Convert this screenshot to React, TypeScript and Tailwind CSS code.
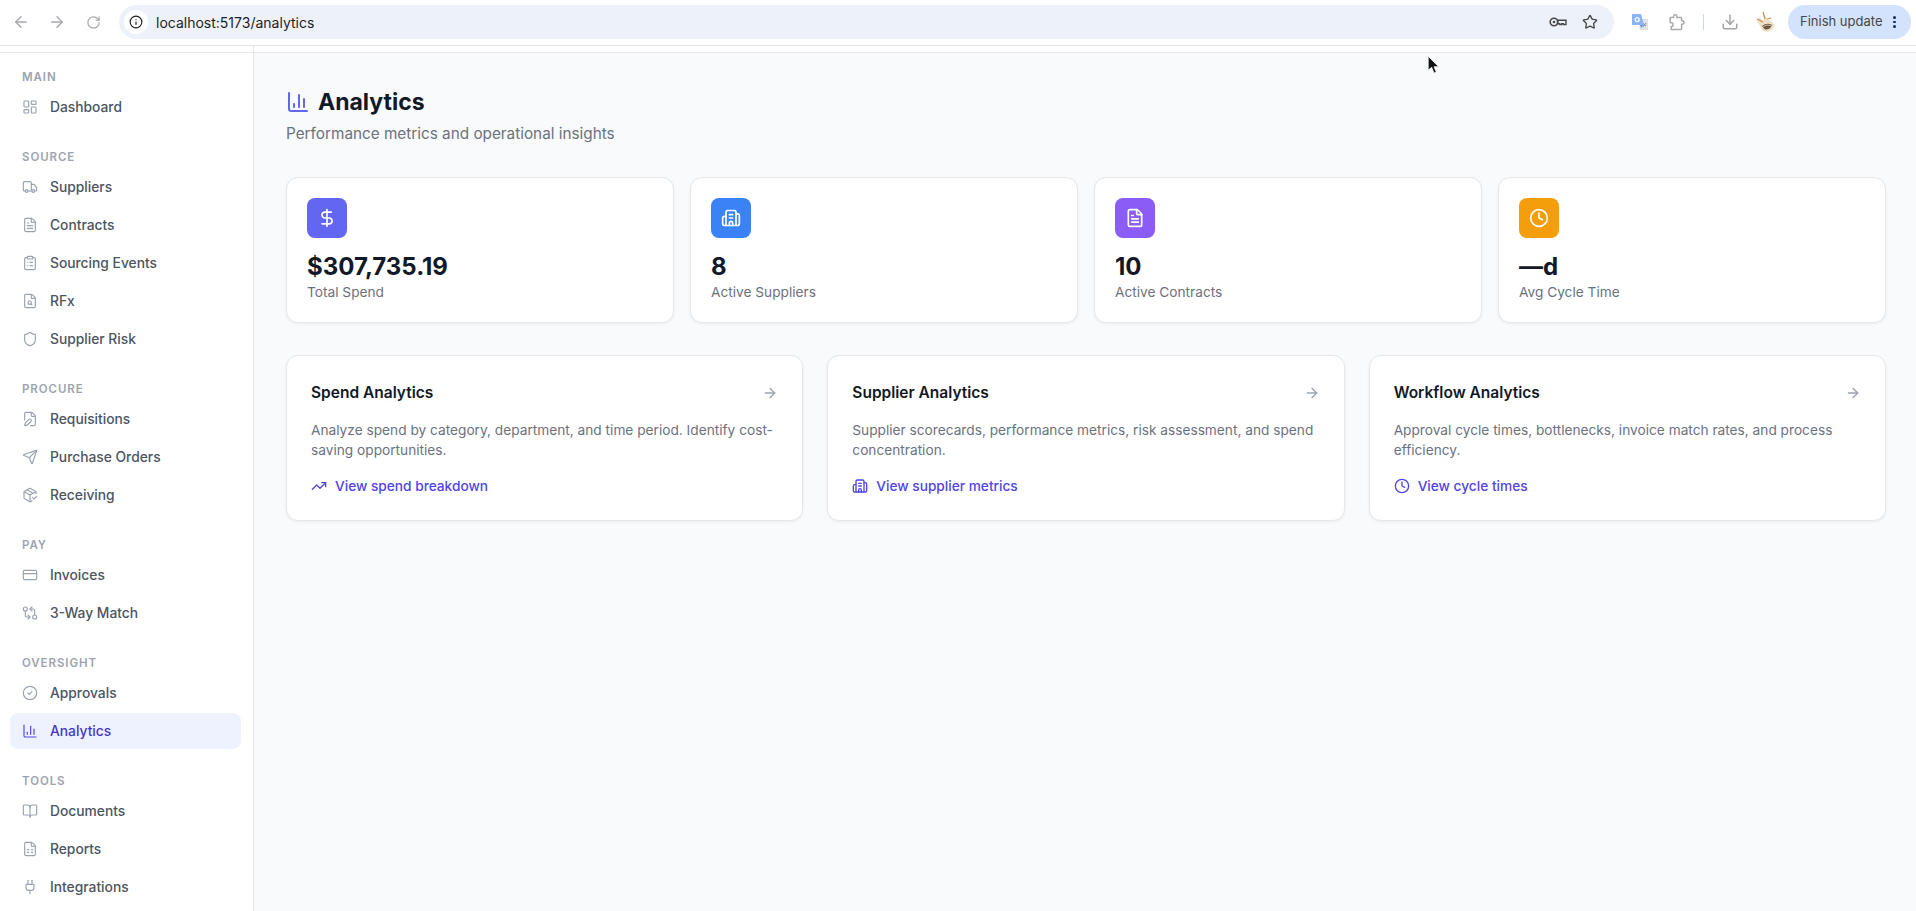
import React from "react";
import {
  ArrowLeft,
  ArrowRight,
  BookOpen,
  Building2,
  ChartColumn,
  CircleCheck,
  ClipboardList,
  Clock,
  CreditCard,
  DollarSign,
  Download,
  FilePen,
  FileSearch,
  FileSpreadsheet,
  FileText,
  GitCompareArrows,
  Info,
  LayoutDashboard,
  PackageCheck,
  Plug,
  RotateCw,
  Send,
  Shield,
  Star,
  TrendingUp,
  Truck,
} from "lucide-react";

const navSections = [
  { label: "Main", items: [{ name: "Dashboard", icon: LayoutDashboard }] },
  {
    label: "Source",
    items: [
      { name: "Suppliers", icon: Truck },
      { name: "Contracts", icon: FileText },
      { name: "Sourcing Events", icon: ClipboardList },
      { name: "RFx", icon: FileSearch },
      { name: "Supplier Risk", icon: Shield },
    ],
  },
  {
    label: "Procure",
    items: [
      { name: "Requisitions", icon: FilePen },
      { name: "Purchase Orders", icon: Send },
      { name: "Receiving", icon: PackageCheck },
    ],
  },
  {
    label: "Pay",
    items: [
      { name: "Invoices", icon: CreditCard },
      { name: "3-Way Match", icon: GitCompareArrows },
    ],
  },
  {
    label: "Oversight",
    items: [
      { name: "Approvals", icon: CircleCheck },
      { name: "Analytics", icon: ChartColumn, active: true },
    ],
  },
  {
    label: "Tools",
    items: [
      { name: "Documents", icon: BookOpen },
      { name: "Reports", icon: FileSpreadsheet },
      { name: "Integrations", icon: Plug },
    ],
  },
];

const stats = [
  { value: "$307,735.19", label: "Total Spend", icon: DollarSign, color: "bg-[#6366f1]" },
  { value: "8", label: "Active Suppliers", icon: Building2, color: "bg-[#3b82f6]" },
  { value: "10", label: "Active Contracts", icon: FileText, color: "bg-[#8b5cf6]" },
  { value: "—d", label: "Avg Cycle Time", icon: Clock, color: "bg-[#f59e0b]" },
];

const cards = [
  {
    title: "Spend Analytics",
    text: "Analyze spend by category, department, and time period. Identify cost-saving opportunities.",
    link: "View spend breakdown",
    icon: TrendingUp,
  },
  {
    title: "Supplier Analytics",
    text: "Supplier scorecards, performance metrics, risk assessment, and spend concentration.",
    link: "View supplier metrics",
    icon: Building2,
  },
  {
    title: "Workflow Analytics",
    text: "Approval cycle times, bottlenecks, invoice match rates, and process efficiency.",
    link: "View cycle times",
    icon: Clock,
  },
];

function KeyIcon() {
  return (
    <svg width="18" height="12" viewBox="0 0 18 12" className="ml-auto text-[#474747]">
      <circle cx="5" cy="6" r="3.8" fill="none" stroke="currentColor" strokeWidth="1.6" />
      <circle cx="5" cy="6" r="1.3" fill="currentColor" />
      <path d="M8.5 4.2 H17 V8.6 H14.6 V7.6 H12.8 V8.6 H10.8 V7.8 H8.5 Z" fill="none" stroke="currentColor" strokeWidth="1.4" />
    </svg>
  );
}

function TranslateIcon() {
  return (
    <svg width="16" height="16" viewBox="0 0 16 16" className="ml-[18px]">
      <path d="M6 5 H16 V16 H8 Z" fill="#dfe1e4" />
      <path d="M11 9 L14 12 M14 9 L11 13" stroke="#8b9096" strokeWidth="1" fill="none" />
      <path d="M0 0 H9 L12 11 H0 Z" fill="#8ab4f8" />
      <path d="M8 11 H12 L9 14 Z" fill="#6f97de" />
      <circle cx="5.2" cy="5.6" r="2" fill="none" stroke="#fff" strokeWidth="1.2" />
    </svg>
  );
}

function ExtensionIcon() {
  return (
    <svg width="16" height="17" viewBox="0 0 16 17" className="ml-[21px] text-[#a8aaad]">
      <path
        d="M1.2 3.6 H4.6 V2.4 A1.6 1.6 0 0 1 7.8 2.4 V3.6 H11.6 A1 1 0 0 1 12.6 4.6 V6.8 H13.4 A1.7 1.7 0 0 1 13.4 10.2 H12.6 V14.6 A1 1 0 0 1 11.6 15.6 H2.2 V12.6 A1.8 1.8 0 0 0 2.2 8.8 H1.2 Z"
        fill="none"
        stroke="currentColor"
        strokeWidth="1.5"
        strokeLinejoin="round"
      />
    </svg>
  );
}

function AvatarIcon() {
  return (
    <svg width="20" height="22" viewBox="0 0 20 22" className="ml-[17px]">
      <path d="M3 6 L8 10 L7 1 L11 8 L15 10 L19 14 L17 18 L12 21 L7 20 L4 15 L1 10 Z" fill="#f0dfc6" />
      <path d="M7 1 L9 8 M1 8 L7 11 M11 8 L15 7" stroke="#c2925a" strokeWidth="1.2" fill="none" />
      <path d="M6 15 Q11 11 16 14 Q14 19 9 18.5 Z" fill="#6b5644" />
      <path d="M7 15.5 Q11 13 15 14.5" stroke="#e6d3b8" strokeWidth="0.8" fill="none" />
    </svg>
  );
}

function BrowserBar() {
  return (
    <div className="flex h-[46px] items-center border-b border-[#e3e3e3] bg-white pr-[5px] pb-[1px] pl-[12px]">
      <ArrowLeft size={18} className="text-[#a9abae]" />
      <ArrowRight size={18} className="ml-[18px] text-[#a9abae]" />
      <RotateCw size={15} className="ml-[20px] text-[#a9abae]" />
      <div className="ml-[18px] flex h-[34px] flex-1 items-center rounded-full bg-[#edf2fa] pr-[16px] pl-[5px]">
        <div className="flex h-[24px] w-[24px] items-center justify-center rounded-full bg-white">
          <Info size={14} className="text-[#1f1f1f]" />
        </div>
        <span className="ml-[8px] text-[14px] text-[#1f1f1f]">localhost:5173/analytics</span>
        <KeyIcon />
        <Star size={16} className="ml-[15px] text-[#474747]" />
      </div>
      <TranslateIcon />
      <ExtensionIcon />
      <div className="ml-[18px] h-[16px] w-[1px] bg-[#c6d8f5]" />
      <Download size={18} className="ml-[17px] text-[#a2a4a7]" />
      <AvatarIcon />
      <div className="ml-[12px] flex h-[34px] w-[123px] items-center rounded-full bg-[#d3e3fd] pl-[12px]">
        <span className="text-[13px] text-[#474747]">Finish update</span>
        <div className="ml-[11px] flex flex-col gap-[2px]">
          <div className="h-[2.5px] w-[2.5px] rounded-full bg-[#0b2e63]" />
          <div className="h-[2.5px] w-[2.5px] rounded-full bg-[#0b2e63]" />
          <div className="h-[2.5px] w-[2.5px] rounded-full bg-[#0b2e63]" />
        </div>
      </div>
    </div>
  );
}

function Sidebar() {
  return (
    <aside className="h-full w-[254px] shrink-0 overflow-hidden border-r border-[#e5e7eb] bg-white">
      <div className="h-[7px] border-b border-[#e5e7eb]" />
      <nav className="pt-[15px] pr-[12px] pl-[10px]">
        {navSections.map((section) => (
          <div key={section.label} className="mb-[23px]">
            <div className="mb-[3px] h-[18px] pl-[12px] text-[11.5px] leading-[18px] font-semibold tracking-[0.08em] text-[#9ca3af] uppercase">
              {section.label}
            </div>
            <div className="flex flex-col gap-[2px]">
              {section.items.map((item) => {
                const Icon = item.icon;
                return (
                  <div
                    key={item.name}
                    className={
                      item.active
                        ? "flex h-[36px] items-center gap-[12px] rounded-[8px] bg-[#eef2ff] pl-[12px] text-[13.8px] font-medium text-[#4338ca]"
                        : "flex h-[36px] items-center gap-[12px] rounded-[8px] pl-[12px] text-[13.8px] font-medium text-[#4b5563]"
                    }
                  >
                    <Icon
                      size={16}
                      strokeWidth={1.75}
                      className={item.active ? "text-[#4f46e5]" : "text-[#9ca3af]"}
                    />
                    {item.name}
                  </div>
                );
              })}
            </div>
          </div>
        ))}
      </nav>
    </aside>
  );
}

function StatCard({ stat }: { stat: (typeof stats)[number] }) {
  const Icon = stat.icon;
  return (
    <div className="rounded-[12px] border border-[#e5e7eb] bg-white px-5 pt-5 pb-[19px] shadow-[0_1px_3px_rgba(0,0,0,0.06)]">
      <div className={`mb-[13px] flex h-10 w-10 items-center justify-center rounded-[8px] ${stat.color}`}>
        <Icon size={20} className="text-white" />
      </div>
      <div className="text-[24px] leading-8 font-bold text-[#111827]">{stat.value}</div>
      <div className="text-[13.7px] leading-[19.5px] text-[#6b7280]">{stat.label}</div>
    </div>
  );
}

function InfoCard({ card }: { card: (typeof cards)[number] }) {
  const Icon = card.icon;
  return (
    <div className="rounded-[12px] border border-[#e5e7eb] bg-white p-6 shadow-[0_1px_3px_rgba(0,0,0,0.06)]">
      <div className="mb-[15px] flex items-center justify-between pt-[1px]">
        <div className="text-[15.5px] leading-6 font-semibold text-[#111827]">{card.title}</div>
        <ArrowRight size={16} className="text-[#9ca3af]" />
      </div>
      <p className="mb-4 text-[13.7px] leading-5 text-[#6b7280]">{card.text}</p>
      <div className="flex items-center gap-[8px] text-[13.7px] leading-5 font-medium text-[#4f46e5]">
        <Icon size={16} />
        {card.link}
      </div>
    </div>
  );
}

export default function App() {
  return (
    <div className="relative flex h-screen flex-col overflow-hidden bg-white font-['Inter',sans-serif]">
      <BrowserBar />
      <div className="flex min-h-0 flex-1">
        <Sidebar />
        <main className="min-w-0 flex-1 bg-[#f9fafb]">
          <div className="h-[7px] border-b border-[#e5e7eb] bg-white" />
          <div className="pt-[33px] pr-[30px] pl-[32px]">
            <div className="flex items-center gap-[8px]">
              <ChartColumn size={24} className="text-[#6366f1]" />
              <h1 className="text-[23px] leading-8 font-bold text-[#111827]">Analytics</h1>
            </div>
            <p className="mt-[5px] text-[15.3px] leading-[22px] text-[#6b7280]">
              Performance metrics and operational insights
            </p>
            <div className="mt-[32px] grid grid-cols-4 gap-4">
              {stats.map((stat) => (
                <StatCard key={stat.label} stat={stat} />
              ))}
            </div>
            <div className="mt-[32px] grid grid-cols-3 gap-6">
              {cards.map((card) => (
                <InfoCard key={card.title} card={card} />
              ))}
            </div>
          </div>
        </main>
      </div>
      {/* mouse pointer caught in the capture */}
      <svg width="14" height="22" viewBox="0 0 12 17" className="absolute top-[54px] left-[1427px]">
        <path d="M1 1 L1 13 L4 10.5 L6 15.5 L8 14.5 L6 10 L10 10 Z" fill="#111" stroke="#fff" strokeWidth="0.7" />
      </svg>
    </div>
  );
}
